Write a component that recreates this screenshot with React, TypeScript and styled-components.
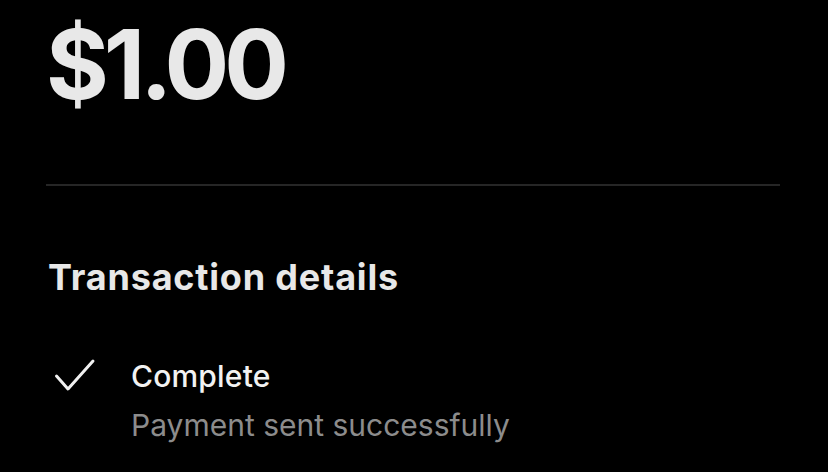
import React from "react";
import styled, { createGlobalStyle } from "styled-components";

const Global = createGlobalStyle`
  html, body { margin: 0; padding: 0; background: #000; }
  body { font-family: Inter, "Noto Sans", sans-serif; -webkit-font-smoothing: antialiased; }
`;

const Page = styled.div`
  width: 828px;
  height: 472px;
  background: #000;
  box-sizing: border-box;
  padding: 14px 48px 0 48px;
  display: flex;
  flex-direction: column;
  overflow: hidden;
`;

const Amount = styled.div`
  font-size: 96px;
  font-weight: 700;
  letter-spacing: -5px;
  color: #e8e8e8;
  line-height: 100px;
  margin-left: -2px;
`;

const Divider = styled.hr`
  border: none;
  height: 2px;
  background: #262626;
  margin: 70px 0 0 -2px;
  width: 734px;
`;

const Heading = styled.h2`
  margin: 71px 0 0 0;
  font-size: 36px;
  font-weight: 700;
  letter-spacing: 0.8px;
  color: #e8e8e8;
  line-height: 40px;
`;

const Row = styled.div`
  display: flex;
  align-items: flex-start;
  margin-top: 61px;
`;

const IconBox = styled.div`
  width: 83px;
  flex: none;
  padding-left: 6px;
  box-sizing: border-box;
  display: flex;
`;

const Texts = styled.div`
  display: flex;
  flex-direction: column;
`;

const Title = styled.div`
  font-size: 30px;
  font-weight: 500;
  letter-spacing: 0.2px;
  color: #f2f2f2;
  line-height: 36px;
`;

const Sub = styled.div`
  margin-top: 13px;
  font-size: 30px;
  font-weight: 400;
  color: #8c8c8c;
  line-height: 36px;
`;

export default function App() {
  return (
    <>
      <Global />
      <Page>
        <Amount>$1.00</Amount>
        <Divider />
        <Heading>Transaction details</Heading>
        <Row>
          <IconBox>
            <svg width="42" height="34" viewBox="0 0 42 34" fill="none">
              <path d="M2.5 18 L14 31 L39 3" stroke="#f0f0f0" strokeWidth="3" strokeLinecap="round" strokeLinejoin="round" />
            </svg>
          </IconBox>
          <Texts>
            <Title>Complete</Title>
            <Sub>Payment sent successfully</Sub>
          </Texts>
        </Row>
      </Page>
    </>
  );
}
